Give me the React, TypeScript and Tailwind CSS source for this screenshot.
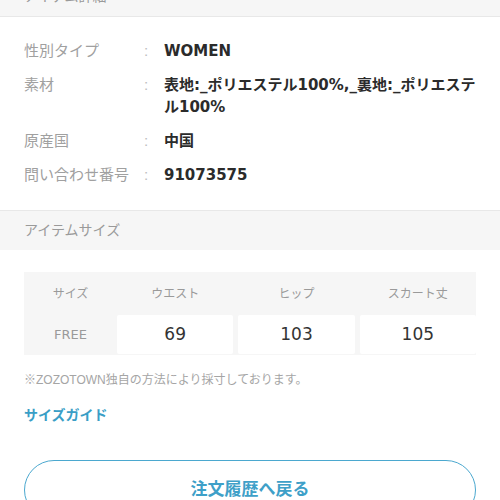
const font = { fontFamily: '"Liberation Sans", "Noto Sans CJK JP", sans-serif' };
const valueFont = { fontFamily: '"DejaVu Sans", "Noto Sans CJK JP", sans-serif' };

const details: { label: string; value: React.ReactNode }[] = [
  { label: '性別タイプ', value: 'WOMEN' },
  {
    label: '素材',
    value: (
      <>
        表地:_ポリエステル100%,_裏地:_ポリエステ
        <br />
        ル100%
      </>
    ),
  },
  { label: '原産国', value: '中国' },
  { label: '問い合わせ番号', value: '91073575' },
];

const sizes = [
  { label: 'ウエスト', value: '69' },
  { label: 'ヒップ', value: '103' },
  { label: 'スカート丈', value: '105' },
];

function SectionHeader({ title, className = '' }: { title: string; className?: string }) {
  return (
    <div className={`h-[40px] bg-[#f6f6f6] border-[#e8e8e8] px-6 flex items-center text-[14px] text-[#9a9a9a] ${className}`}>
      {title}
    </div>
  );
}

export default function App() {
  return (
    <div className="w-[500px] h-[500px] overflow-hidden bg-white" style={font}>
      <SectionHeader title="アイテム詳細" className="mt-[-23px] border-b" />

      {/* Detail rows */}
      <div className="px-6 pt-[23px] pb-[24px] flex flex-col gap-[12px]">
        {details.map(d => (
          <div key={d.label} className="flex text-[15px] leading-[22px]">
            <div className="w-[120px] text-[#a0a0a0] shrink-0">{d.label}</div>
            <div className="w-[20px] text-[#bdbdbd] shrink-0">:</div>
            <div className="flex-1 font-semibold text-[#2b2b2b] whitespace-nowrap" style={valueFont}>{d.value}</div>
          </div>
        ))}
      </div>

      <SectionHeader title="アイテムサイズ" className="border-t" />

      {/* Size table */}
      <div className="mx-6 mt-[22px] bg-[#f6f6f6]">
        <div className="flex h-[43px] items-center text-[12px] text-[#9a9a9a]">
          <div className="w-[93px] text-center">サイズ</div>
          {sizes.map((s, i) => (
            <div key={s.label} className={`flex-1 text-center ${i > 0 ? 'ml-[5px]' : ''}`}>{s.label}</div>
          ))}
        </div>
        <div className="flex h-[40px] pb-[1px]" style={valueFont}>
          <div className="w-[93px] flex items-center justify-center text-[13px] text-[#9a9a9a]">FREE</div>
          {sizes.map((s, i) => (
            <div
              key={s.label}
              className={`flex-1 bg-white flex items-center justify-center text-[17px] text-[#333] rounded-[2px] ${i > 0 ? 'ml-[5px]' : ''}`}
            >
              {s.value}
            </div>
          ))}
        </div>
      </div>

      <p className="px-6 mt-[16px] text-[12px] leading-[18px] text-[#a5a5a5]">
        ※ZOZOTOWN独自の方法により採寸しております。
      </p>

      <div className="px-6 mt-[16px] text-[14px] leading-[20px] font-bold text-[#3a9ec6]">サイズガイド</div>

      <div className="mx-6 mt-[35px] h-[60px] rounded-full border-[1.5px] border-[#4ba8cf] flex items-center justify-center text-[17px] font-bold text-[#3ea0c8]">
        注文履歴へ戻る
      </div>
    </div>
  );
}
